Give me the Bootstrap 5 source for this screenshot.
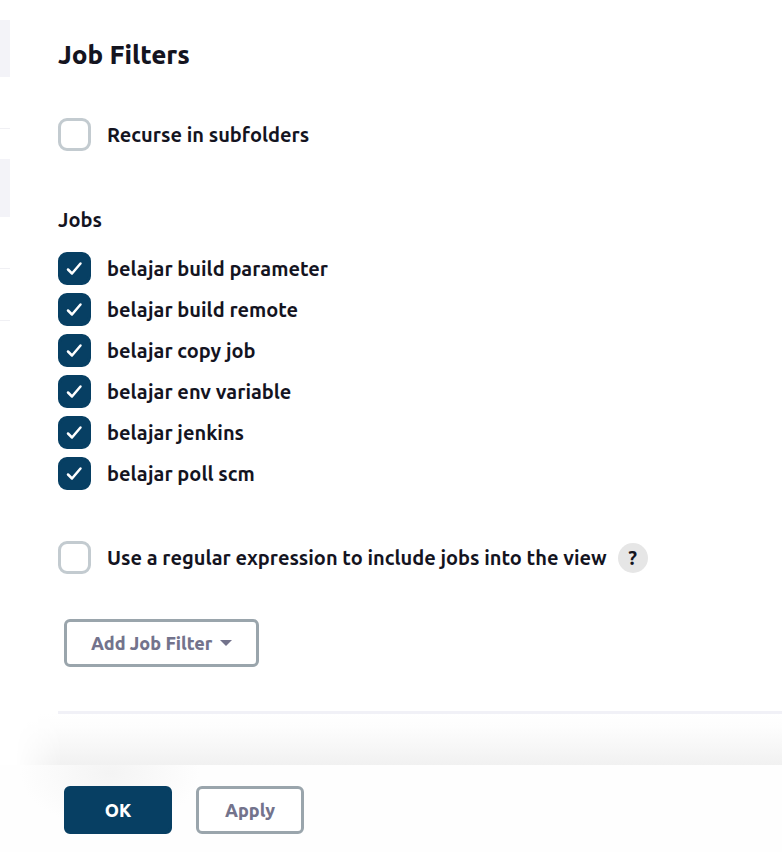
<!DOCTYPE html>
<html lang="en">
<head>
<meta charset="utf-8">
<meta name="viewport" content="width=device-width, initial-scale=1">
<title>Job Filters</title>
<link href="https://cdn.jsdelivr.net/npm/bootstrap@5.3.0/dist/css/bootstrap.min.css" rel="stylesheet">
<style>
  body { font-family: Ubuntu, "Noto Sans", sans-serif; font-size: 20px; line-height: 33px; font-weight: 600; color: #14141f; background: #fff; }
  .side-strip { width: 10px; padding-top: 20px; }
  .side-item { height: 57px; background: #f3f3f8; }
  .side-item.tall { height: 58px; }
  .side-rule { height: 1px; background: #f0f0f4; }
  .gap-a { height: 51px; }
  .gap-b { height: 30px; }
  .filters { padding: 38px 0 0 48px; }
  .filters h1 { font-size: 26px; line-height: 34px; font-weight: 800; margin-bottom: 46px; }
  fieldset legend { font-size: 20px; line-height: 34px; margin-bottom: 15px; }
  .job-list { gap: 8px; margin-bottom: 51px; }
  .check-row { gap: 16px; }
  .regex-row { margin-bottom: 45px; }
  .check-row .form-check-input { width: 33px; height: 33px; margin: 0; border: 3px solid #c3cbd0; border-radius: 9px; flex: none; }
  .check-row .form-check-input:checked { background-color: #073f63; border-color: #073f63;
    background-image: url("data:image/svg+xml,%3Csvg xmlns='http://www.w3.org/2000/svg' viewBox='0 0 27 27'%3E%3Cpath d='M7 14.500l4 4L19.500 8.500' fill='none' stroke='%23fff' stroke-width='2.500' stroke-linecap='round' stroke-linejoin='round'/%3E%3C/svg%3E"); background-size: 27px 27px; }
  .help-btn { width: 30px; height: 30px; margin-left: -5px; border: 0; border-radius: 50%; padding: 0; background: #e6e6e6; color: #14141f; font-size: 20px; line-height: 30px; font-weight: 600; }
  .btn-box { --bs-btn-border-width: 3px; --bs-btn-border-radius: 6px; --bs-btn-font-size: 18px; --bs-btn-font-weight: 800; --bs-btn-line-height: 42px; --bs-btn-padding-y: 0; --bs-btn-padding-x: 24px;
    --bs-btn-color: #73738c; --bs-btn-border-color: #9aa5ac; --bs-btn-bg: #fff; --bs-btn-hover-color: #73738c; --bs-btn-hover-border-color: #9aa5ac; --bs-btn-hover-bg: #f3f3f8; }
  .btn-dark-blue { --bs-btn-color: #fff; --bs-btn-border-color: #073f63; --bs-btn-bg: #073f63; --bs-btn-hover-color: #fff; --bs-btn-hover-border-color: #052f4a; --bs-btn-hover-bg: #052f4a; }
  .btn-action { min-width: 108px; }
  .add-filter { margin-left: 6px; }
  .add-filter::after { border-top-width: 6px; border-left-width: 6px; border-right-width: 6px; margin-left: 8px; vertical-align: 4px; }
  .section-rule { height: 3px; background: #f1f1f7; margin-top: 44px; }
  .bar-shade { height: 51px; background: linear-gradient(to top, #f1f1f1, #f7f7f7 35%, #fdfdfd 75%, #fff);
    -webkit-mask-image: linear-gradient(to right, transparent 15px, #000 62px); mask-image: linear-gradient(to right, transparent 15px, #000 62px); }
  .action-bar { padding: 21px 64px 18px; gap: 24px; background: radial-gradient(ellipse 90px 54px at 110px 8px, #f4f4f4, rgba(254,254,254,0)) #fefefe; }
</style>
</head>
<body class="d-flex flex-column min-vh-100">
<div class="d-flex">
  <aside class="side-strip flex-shrink-0" aria-hidden="true">
    <div class="side-item"></div>
    <div class="gap-a"></div>
    <div class="side-rule"></div>
    <div class="gap-b"></div>
    <div class="side-item tall"></div>
    <div class="gap-a"></div>
    <div class="side-rule"></div>
    <div class="gap-a"></div>
    <div class="side-rule"></div>
  </aside>
  <main class="filters flex-grow-1">
    <h1>Job Filters</h1>
    <div class="check-row d-flex align-items-center mb-5">
      <input class="form-check-input" type="checkbox" id="recurse">
      <label for="recurse">Recurse in subfolders</label>
    </div>
    <fieldset class="pt-1">
      <legend>Jobs</legend>
      <div class="job-list d-flex flex-column">
        <div class="check-row d-flex align-items-center"><input class="form-check-input" type="checkbox" id="job1" checked><label for="job1">belajar build parameter</label></div>
        <div class="check-row d-flex align-items-center"><input class="form-check-input" type="checkbox" id="job2" checked><label for="job2">belajar build remote</label></div>
        <div class="check-row d-flex align-items-center"><input class="form-check-input" type="checkbox" id="job3" checked><label for="job3">belajar copy job</label></div>
        <div class="check-row d-flex align-items-center"><input class="form-check-input" type="checkbox" id="job4" checked><label for="job4">belajar env variable</label></div>
        <div class="check-row d-flex align-items-center"><input class="form-check-input" type="checkbox" id="job5" checked><label for="job5">belajar jenkins</label></div>
        <div class="check-row d-flex align-items-center"><input class="form-check-input" type="checkbox" id="job6" checked><label for="job6">belajar poll scm</label></div>
      </div>
    </fieldset>
    <div class="check-row regex-row d-flex align-items-center">
      <input class="form-check-input" type="checkbox" id="regex">
      <label for="regex">Use a regular expression to include jobs into the view</label>
      <button type="button" class="help-btn" aria-label="Help for regular expression">?</button>
    </div>
    <button type="button" class="btn btn-box add-filter dropdown-toggle">Add Job Filter</button>
    <div class="section-rule"></div>
  </main>
</div>
<div class="bar-shade"></div>
<footer class="action-bar d-flex flex-grow-1 align-items-start">
  <button type="submit" class="btn btn-box btn-dark-blue btn-action">OK</button>
  <button type="button" class="btn btn-box btn-action">Apply</button>
</footer>
<script src="https://cdn.jsdelivr.net/npm/bootstrap@5.3.0/dist/js/bootstrap.bundle.min.js"></script>
</body>
</html>
